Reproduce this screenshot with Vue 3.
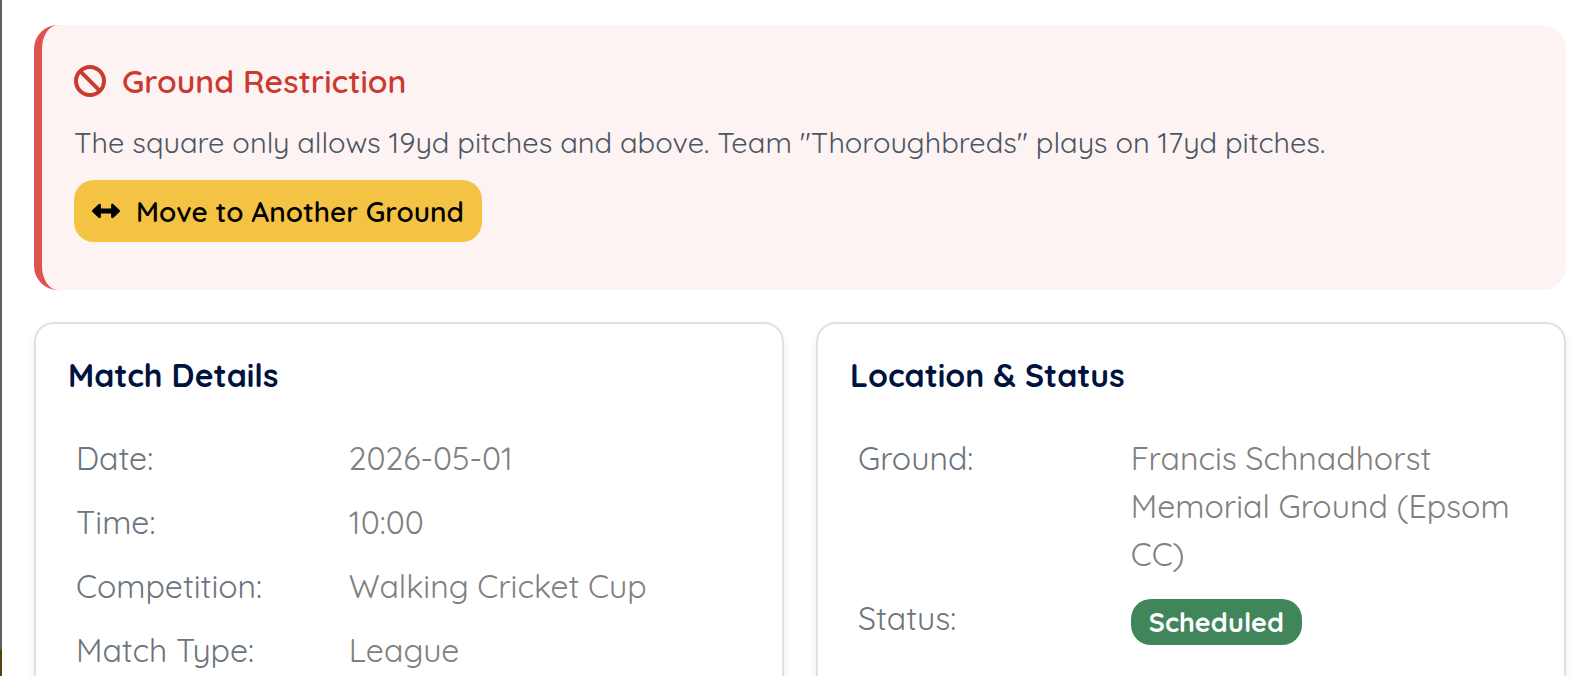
<script setup>
import { ref } from 'vue'

const restriction = {
  title: 'Ground Restriction',
  message:
    'The square only allows 19yd pitches and above. Team "Thoroughbreds" plays on 17yd pitches.',
}

const matchDetails = ref([
  { label: 'Date:', value: '2026-05-01' },
  { label: 'Time:', value: '10:00' },
  { label: 'Competition:', value: 'Walking Cricket Cup' },
  { label: 'Match Type:', value: 'League' },
])

const ground = ref('Francis Schnadhorst Memorial Ground (Epsom CC)')
const status = ref('Scheduled')
</script>

<template>
  <main class="md-page">
    <!-- Restriction alert -->
    <section class="md-alert" role="alert">
      <h2 class="md-alert-title">
        <svg
          class="md-ban"
          viewBox="0 0 512 512"
          fill="none"
          stroke="currentColor"
          stroke-width="64"
          aria-hidden="true"
        >
          <circle cx="256" cy="256" r="224" />
          <path d="M98 98l316 316" />
        </svg>
        <span>{{ restriction.title }}</span>
      </h2>
      <p class="md-alert-text">{{ restriction.message }}</p>
      <button type="button" class="md-move-btn">
        <svg class="md-arrows" viewBox="0 0 28 28" fill="currentColor" aria-hidden="true">
          <path
            d="M.4 13.1l6.200-5.900c.9-.8 2.300-.2 2.300 1v3.300h10.200V8.200c0-1.200 1.400-1.800 2.300-1l6.200 5.900c.5.5.5 1.300 0 1.800l-6.200 5.900c-.9.8-2.300.2-2.300-1v-3.300H8.900v3.300c0 1.200-1.400 1.800-2.300 1L.4 14.900c-.5-.5-.5-1.300 0-1.800z"
          />
        </svg>
        <span>Move to Another Ground</span>
      </button>
    </section>

    <div class="md-grid">
      <section class="md-card">
        <h3 class="md-card-title">Match Details</h3>
        <table class="md-table">
          <tbody>
            <tr v-for="row in matchDetails" :key="row.label">
              <th scope="row">{{ row.label }}</th>
              <td>{{ row.value }}</td>
            </tr>
          </tbody>
        </table>
      </section>

      <section class="md-card">
        <h3 class="md-card-title">Location &amp; Status</h3>
        <table class="md-table">
          <tbody>
            <tr>
              <th scope="row">Ground:</th>
              <td>{{ ground }}</td>
            </tr>
            <tr>
              <th scope="row">Status:</th>
              <td>
                <span class="md-badge">{{ status }}</span>
              </td>
            </tr>
          </tbody>
        </table>
      </section>
    </div>
  </main>
</template>

<style>
body {
  margin: 0;
  background: #ffffff;
}
</style>

<style scoped>
.md-page {
  box-sizing: border-box;
  min-height: 100vh;
  padding: 25px 8px 32px 34px;
  font-family: Quicksand, Lato, 'Open Sans', sans-serif;
  font-variant-ligatures: none;
  /* dimmed backdrop showing along the left edge */
  background: linear-gradient(#5f5f5f 0 650px, #5a3f10 650px) left top / 2px 100% no-repeat;
}

/* Alert */
.md-alert {
  padding: 32px 32px 48px;
  border-left: 8px solid #df534e;
  border-radius: 24px;
  background: #fcf3f2;
}

.md-alert-title {
  display: flex;
  align-items: center;
  gap: 16px;
  margin: 0 0 16px;
  color: #ca3a31;
  font-size: 32px;
  font-weight: 600;
  line-height: 48px;
}

.md-ban {
  flex-shrink: 0;
  width: 32px;
  height: 32px;
}

.md-alert-text {
  margin: 0 0 16px;
  color: #4b5563;
  font-size: 29px;
  line-height: 43px;
}

.md-move-btn {
  display: inline-flex;
  align-items: center;
  gap: 16px;
  height: 62px;
  padding: 0 18px;
  border: none;
  border-radius: 20px;
  background: #f5c344;
  color: #000000;
  font-family: inherit;
  font-size: 28px;
  font-weight: 600;
  cursor: pointer;
}

.md-arrows {
  flex-shrink: 0;
  width: 28px;
  height: 28px;
}

/* Cards */
.md-grid {
  display: grid;
  grid-template-columns: 1fr 1fr;
  gap: 32px;
  margin-top: 32px;
}

.md-card {
  padding: 32px;
  border: 2px solid #dee2e6;
  border-radius: 20px;
  background: #ffffff;
  box-shadow: 0 4px 8px rgba(0, 0, 0, 0.07);
}

.md-card-title {
  margin: 0 0 32px;
  color: #00133f;
  font-size: 32px;
  font-weight: 700;
  line-height: 38px;
}

.md-table {
  width: 100%;
  table-layout: fixed;
  border-collapse: collapse;
  font-size: 32px;
  line-height: 48px;
}

.md-table th,
.md-table td {
  padding: 8px;
  text-align: left;
  vertical-align: top;
  font-weight: 400;
}

.md-table th {
  width: 40%;
  box-sizing: border-box;
  color: #6c757d;
}

.md-table td {
  color: #808080;
}

.md-badge {
  display: inline-block;
  padding: 0 18px;
  border-radius: 20px;
  background: #41865a;
  color: #ffffff;
  font-size: 27px;
  font-weight: 700;
  line-height: 46px;
  vertical-align: middle;
}
</style>
